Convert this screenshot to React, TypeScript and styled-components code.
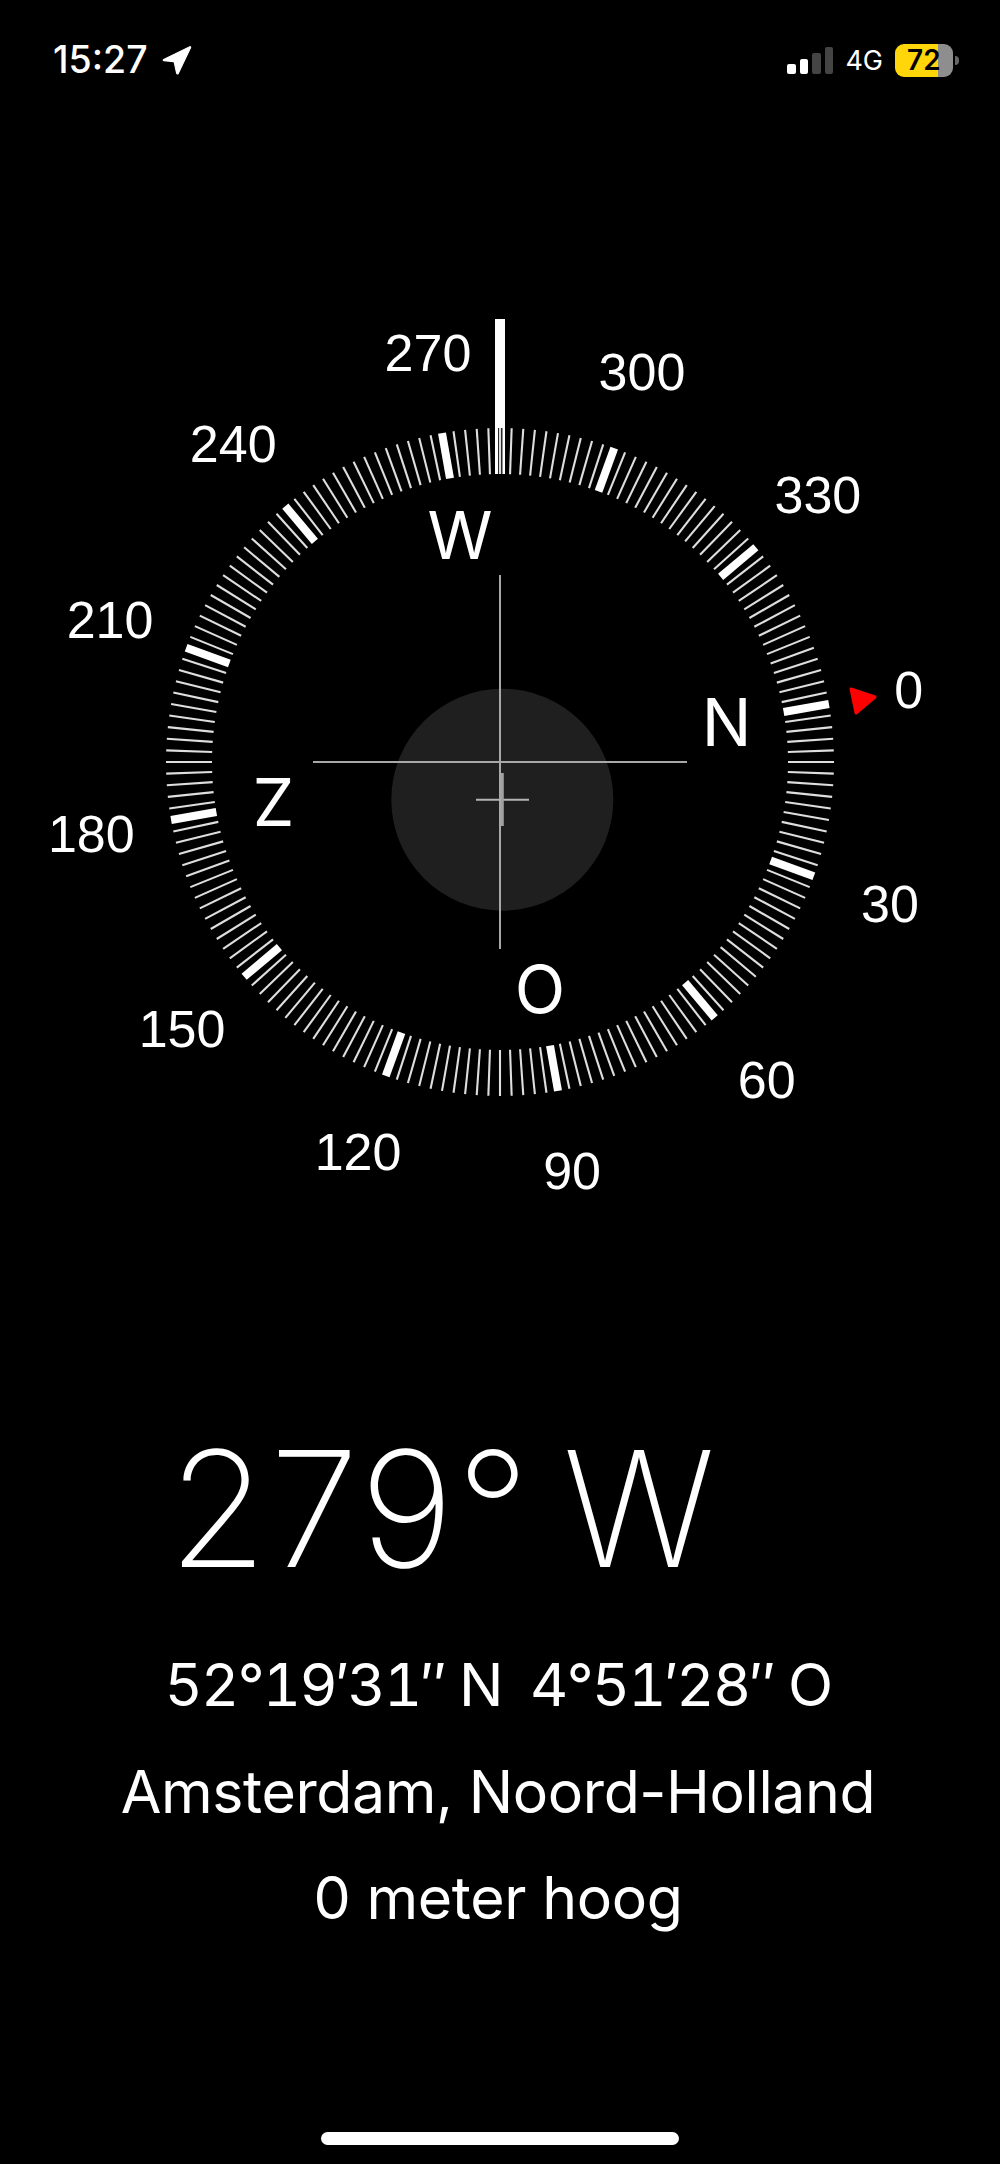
import React from "react";
import styled, { createGlobalStyle } from "styled-components";

const CENTER = 500;
const HEADING = 280;
const OUTER = 334;
const INNER = 288;
const DEGREE_RADIUS = 415;
const CARDINAL_RADIUS = 230;

const degrees = [0, 30, 60, 90, 120, 150, 180, 210, 240, 270, 300, 330];
const cardinals = [
  { text: "N", deg: 0 },
  { text: "O", deg: 90 },
  { text: "Z", deg: 180 },
  { text: "W", deg: 270 },
];
const ticks = Array.from({ length: 180 }, (_, i) => i * 2);

// screen position of a compass bearing, with the dial turned to HEADING
const polar = (deg: number, radius: number) => {
  const a = ((deg - HEADING) * Math.PI) / 180;
  return { x: CENTER + radius * Math.sin(a), y: CENTER - radius * Math.cos(a) };
};

const App: React.FC = () => {
  return (
    <Screen>
      <GlobalStyle />
      <StatusBar>
        <TimeGroup>
          <Time>15:27</Time>
          <svg width="32" height="32" viewBox="0 0 30 30">
            <path
              d="M2.5 14.5 27 2.6c.6-.3 1.1.2.8.8L16.2 27.6c-.4.8-1.4.7-1.6-.2l-2.2-10.2c-.1-.4-.3-.6-.7-.7L2.7 15.6c-.8-.2-.9-.8-.2-1.1z"
              fill="#fff"
              stroke="#fff"
              strokeWidth="1"
              strokeLinejoin="round"
            />
          </svg>
        </TimeGroup>
        <Indicators>
          <Signal>
            <SignalBar $height={10} $on />
            <SignalBar $height={15} $on />
            <SignalBar $height={21} />
            <SignalBar $height={27} />
          </Signal>
          <Network>4G</Network>
          <Battery>
            <BatteryBody>
              <BatteryLevel>72</BatteryLevel>
            </BatteryBody>
            <BatteryNub />
          </Battery>
        </Indicators>
      </StatusBar>

      <Compass>
        <svg width="1000" height="1000" viewBox="0 0 1000 1000">
          <circle cx="502.3" cy="537.7" r="111" fill="#1f1f1f" />
          <rect x="495" y="57" width="10" height="155" fill="#fff" />
          {/* dark edge round the tick that sits under the heading marker */}
          <rect x="498" y="166" width="4.5" height="46" fill="#222" />
          {ticks.map((deg) => {
            const major = deg % 30 === 0;
            const from = polar(deg, INNER);
            const to = polar(deg, OUTER);
            return (
              <line
                key={deg}
                x1={from.x}
                y1={from.y}
                x2={to.x}
                y2={to.y}
                stroke={major ? "#fff" : "#dedede"}
                strokeWidth={major ? 8 : 2.1}
              />
            );
          })}
          <line x1="313" y1="500" x2="687" y2="500" stroke="#a8a8a8" strokeWidth="2" />
          <line x1="500" y1="313" x2="500" y2="687" stroke="#a8a8a8" strokeWidth="2" />
          <line x1="476" y1="537.7" x2="529" y2="537.7" stroke="#b4b4b4" strokeWidth="2" />
          <line x1="502.3" y1="511" x2="502.3" y2="564" stroke="#a0a0a0" strokeWidth="3" />
          <path
            d="M851 427 L875 435 L856 451 Z"
            fill="#f00"
            stroke="#f00"
            strokeWidth="3"
            strokeLinejoin="round"
          />
        </svg>
        {degrees.map((deg) => {
          const p = polar(deg, DEGREE_RADIUS);
          return (
            <DegreeLabel key={deg} style={{ left: p.x, top: p.y }}>
              {deg}
            </DegreeLabel>
          );
        })}
        {cardinals.map((c) => {
          const p = polar(c.deg, CARDINAL_RADIUS);
          return (
            <CardinalLabel key={c.text} style={{ left: p.x, top: p.y }}>
              {c.text}
            </CardinalLabel>
          );
        })}
      </Compass>

      <Readout>
        <Heading>279° W</Heading>
        <CoordLine>52°19′31″ N&nbsp;&nbsp;4°51′28″ O</CoordLine>
        <InfoLine>Amsterdam, Noord-Holland</InfoLine>
        <InfoLine>0 meter hoog</InfoLine>
      </Readout>

      <HomeIndicator />
    </Screen>
  );
};

const GlobalStyle = createGlobalStyle`
  html, body {
    margin: 0;
    padding: 0;
    background: #000;
  }
`;

const Screen = styled.div`
  display: flex;
  flex-direction: column;
  width: 1000px;
  height: 2164px;
  background: #000;
  color: #fff;
  font-family: Inter, "Liberation Sans", sans-serif;
  overflow: hidden;
`;

const StatusBar = styled.div`
  display: flex;
  justify-content: space-between;
  align-items: center;
  height: 120px;
  padding: 0 41px 0 53px;
  box-sizing: border-box;
`;

const TimeGroup = styled.div`
  display: flex;
  align-items: center;
  gap: 13px;
`;

const Time = styled.span`
  font-family: Inter, sans-serif;
  font-size: 37.5px;
  font-weight: 500;
  line-height: 1;
`;

const Indicators = styled.div`
  display: flex;
  align-items: center;
`;

const Signal = styled.div`
  display: flex;
  align-items: flex-end;
  gap: 4px;
  height: 27px;
  margin-right: 12px;
`;

const SignalBar = styled.span<{ $height: number; $on?: boolean }>`
  width: 8.5px;
  height: ${(p) => p.$height}px;
  border-radius: 2px;
  background: ${(p) => (p.$on ? "#fff" : "#444")};
`;

const Network = styled.span`
  font-family: Inter, sans-serif;
  font-size: 27px;
  font-weight: 400;
  margin-right: 12px;
  line-height: 1;
`;

const Battery = styled.div`
  display: flex;
  align-items: center;
  gap: 2px;
`;

const BatteryBody = styled.div`
  display: flex;
  align-items: center;
  width: 58px;
  height: 33px;
  padding-left: 12px;
  box-sizing: border-box;
  border-radius: 9px;
  background: linear-gradient(to right, #ffd60a 43px, #8e8e8e 43px);
`;

const BatteryLevel = styled.span`
  font-family: Inter, sans-serif;
  font-size: 28px;
  font-weight: 600;
  color: #000;
  line-height: 1;
`;

const BatteryNub = styled.span`
  width: 4px;
  height: 9px;
  border-radius: 0 4px 4px 0;
  background: #666;
`;

const Compass = styled.div`
  position: relative;
  flex: none;
  width: 1000px;
  height: 1000px;
  margin-top: 142px;

  svg {
    display: block;
  }
`;

const DegreeLabel = styled.span`
  position: absolute;
  transform: translate(-50%, -50%);
  font-family: "Liberation Sans", sans-serif;
  font-size: 52px;
  font-weight: 400;
  line-height: 1;
`;

const CardinalLabel = styled.span`
  position: absolute;
  transform: translate(-50%, -50%);
  font-family: Inter, sans-serif;
  font-size: 66px;
  font-weight: 400;
  line-height: 1;
`;

const Readout = styled.div`
  display: flex;
  flex-direction: column;
  align-items: center;
  margin-top: 147px;
`;

const Heading = styled.div`
  align-self: flex-start;
  margin-left: 168px;
  margin-bottom: 23px;
  font-family: Inter, sans-serif;
  font-size: 161px;
  font-weight: 200;
  line-height: 200px;
  letter-spacing: 2.5px;
  word-spacing: -17px;
`;

const InfoLine = styled.div`
  margin-left: -4px;
  font-family: Inter, sans-serif;
  font-size: 59px;
  font-weight: 440;
  line-height: 106.5px;
  letter-spacing: -0.4px;
`;

const CoordLine = styled(InfoLine)`
  font-variant-numeric: tabular-nums;
  letter-spacing: -1.7px;
`;

const HomeIndicator = styled.div`
  align-self: center;
  width: 358px;
  height: 13px;
  margin-top: auto;
  margin-bottom: 19px;
  border-radius: 7px;
  background: #fff;
`;

export default App;
